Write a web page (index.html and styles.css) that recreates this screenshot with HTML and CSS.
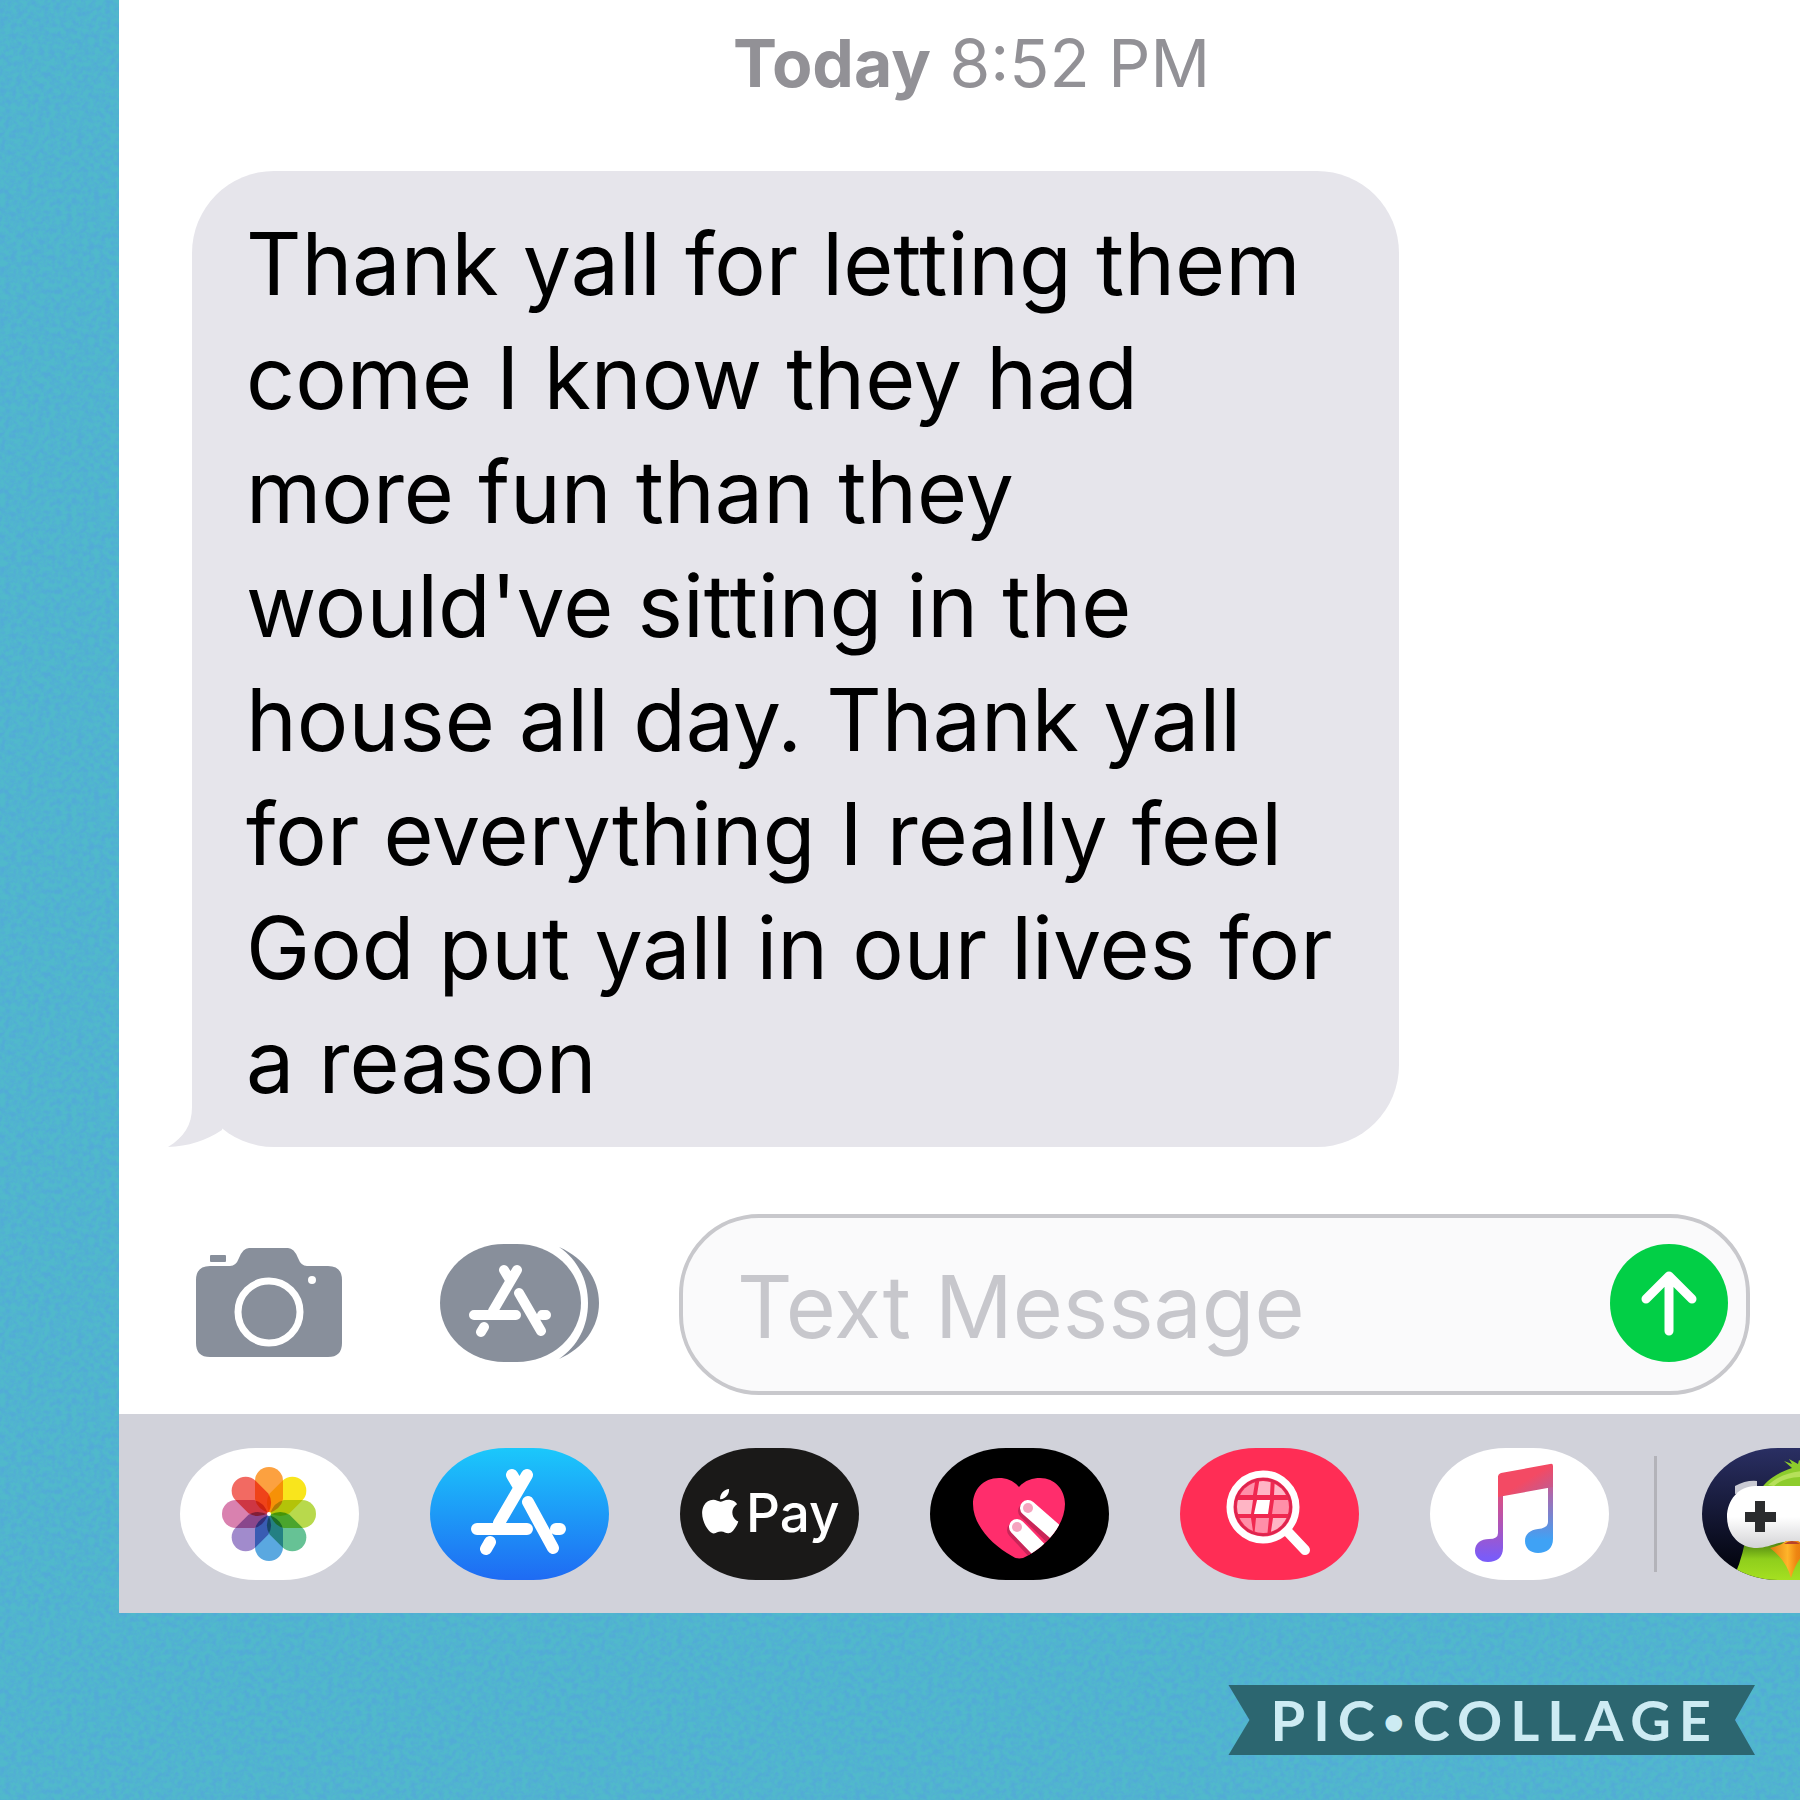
FILE: index.html
```html
<!DOCTYPE html>
<html lang="en">
<head>
<meta charset="utf-8">
<meta name="viewport" content="width=device-width, initial-scale=1">
<title>Messages</title>
<link rel="stylesheet" href="styles.css">
</head>
<body>
<main class="phone">
  <section class="thread">
    <p class="stamp"><strong>Today</strong> 8:52 PM</p>
    <div class="bubble">
      <p class="bubble-text">Thank yall for letting them<br>come I know they had<br>more fun than they<br>would've sitting in the<br>house all day. Thank yall<br>for everything I really feel<br>God put yall in our lives for<br>a reason</p>
      <svg class="tail" viewBox="0 0 60 90" aria-hidden="true"><path d="M24 0V50C24 68 16 80 0 90Q30 89 54 73L60 40V0z"/></svg>
    </div>
  </section>

  <form class="composer">
    <button class="tool camera" type="button" aria-label="Camera">
      <svg viewBox="0 0 146 110" width="146" height="110"><g fill="#888f9b"><rect x="14" y="7" width="16" height="7" rx="1"/><path d="M14 18H34Q40 18 43 10Q47 0 53 0H92Q98 0 102 10Q105 18 111 18H132Q146 18 146 32V95Q146 109 132 109H14Q0 109 0 95V32Q0 18 14 18z"/></g><circle cx="73" cy="64" r="31" fill="none" stroke="#fff" stroke-width="7"/><circle cx="116" cy="32" r="4" fill="#fff"/></svg>
    </button>
    <button class="tool apps" type="button" aria-label="Apps">
      <svg viewBox="0 0 160 118" width="160" height="118"><path fill="#888f9b" d="M119 3C144 14 159 35 159 59S144 104 119 115C138 102 148 82 148 59S138 16 119 3z"/><rect width="141" height="118" rx="64" ry="59" fill="#888f9b"/><g fill="none" stroke="#fff" stroke-width="10" stroke-linecap="round"><path d="M77 26L53 67M64 26L70 36M34 71H76M102 71H106M79 49L101 87M41 88L44 83"/></g></svg>
    </button>
    <div class="field">
      <input class="entry" type="text" placeholder="Text Message" aria-label="Text Message">
      <button class="send" type="submit" aria-label="Send">
        <svg viewBox="0 0 118 118" width="118" height="118"><path fill="none" stroke="#fff" stroke-width="9" stroke-linecap="round" stroke-linejoin="round" d="M59 87V33M36 55L59 32L82 55"/></svg>
      </button>
    </div>
  </form>

  <nav class="tray" aria-label="iMessage apps">
    <button class="app photos" type="button" aria-label="Photos">
      <svg viewBox="0 0 179 132" width="179" height="132">
        <defs><path id="petal" d="M-14 -33A14 14 0 0 1 14 -33V-15Q12 -5 0 -1Q-12 -5 -14 -15z"/></defs>
        <g class="petals" transform="translate(89 66)">
          <use href="#petal" fill="#fca140"/>
          <use href="#petal" fill="#f9e51c" transform="rotate(45)"/>
          <use href="#petal" fill="#b8d94c" transform="rotate(90)"/>
          <use href="#petal" fill="#66c295" transform="rotate(135)"/>
          <use href="#petal" fill="#5aa8e0" transform="rotate(180)"/>
          <use href="#petal" fill="#a18bcc" transform="rotate(225)"/>
          <use href="#petal" fill="#d981af" transform="rotate(270)"/>
          <use href="#petal" fill="#f26a62" transform="rotate(315)"/>
        </g>
        <circle cx="89" cy="66" r="2" fill="#fff"/>
      </svg>
    </button>
    <button class="app store" type="button" aria-label="App Store">
      <svg viewBox="0 0 179 132" width="179" height="132"><path fill="none" stroke="#fff" stroke-width="12" stroke-linecap="round" d="M97 27L69 75M82 27L89 39M47 81H97M126 81H130M98 54L123 100M56 101L60 94"/></svg>
    </button>
    <button class="app pay" type="button" aria-label="Apple Pay">
      <svg viewBox="0 0 179 132" width="179" height="132"><g fill="#fff"><path transform="translate(18 41) scale(1.85)" d="M12.152 6.896c-.948 0-2.415-1.078-3.96-1.04-2.04.027-3.91 1.183-4.961 3.014-2.117 3.675-.546 9.103 1.519 12.09 1.013 1.454 2.208 3.09 3.792 3.039 1.52-.065 2.09-.987 3.935-.987 1.831 0 2.35.987 3.96.948 1.637-.026 2.676-1.48 3.676-2.948 1.156-1.688 1.636-3.325 1.662-3.415-.039-.013-3.182-1.221-3.22-4.857-.026-3.04 2.48-4.494 2.597-4.559-1.429-2.09-3.623-2.324-4.39-2.376-2-.156-3.675 1.09-4.61 1.09zM15.53 3.83c.843-1.012 1.4-2.427 1.245-3.83-1.207.052-2.662.805-3.532 1.818-.78.896-1.454 2.338-1.273 3.714 1.338.104 2.715-.688 3.559-1.701"/><text class="pay-text" x="66" y="84">Pay</text></g></svg>
    </button>
    <button class="app touch" type="button" aria-label="Digital Touch">
      <svg viewBox="0 0 179 132" width="179" height="132">
        <defs><clipPath id="heart"><path d="M89 39C95 32 103 30 110 30C125 30 135 42 135 56C135 77 116 98 97 108Q89 113 82 108C62 97 43 77 43 56C43 42 53 30 69 30C77 30 84 33 89 39z"/></clipPath></defs>
        <g clip-path="url(#heart)"><rect width="179" height="132" fill="#ff2d6c"/>
          <g stroke-linecap="round" fill="none"><path stroke="#c92558" stroke-width="16" d="M85 82L110 109M96 63L132 98"/><path stroke="#fff" stroke-width="16" d="M98 60L138 95M87 79L117 110"/></g>
          <g fill="#f6a3bf"><circle cx="98" cy="60" r="5"/><circle cx="87" cy="79" r="5"/></g>
        </g>
      </svg>
    </button>
    <button class="app images" type="button" aria-label="#images">
      <svg viewBox="0 0 179 132" width="179" height="132">
        <defs><clipPath id="lens"><circle cx="83" cy="59" r="26"/></clipPath></defs>
        <circle cx="83" cy="59" r="29" fill="#d92650"/><circle cx="83" cy="59" r="27" fill="#f02850"/>
        <g clip-path="url(#lens)">
          <path fill="#ff8fa8" d="M50 28H76L73 47H50zM94 52H112V66H92zM50 70H71L74 90H50zM76 70H89L87 90H74z"/>
          <path fill="#ffb5c5" d="M80 28H91L90 47H77zM95 28H112V47H94zM50 52H73L71 66H50zM93 70H112V90H90z"/>
          <path fill="#fff" d="M77 52H90L88 66H74z"/>
        </g>
        <circle cx="83" cy="59" r="33" fill="none" stroke="#fff" stroke-width="7"/>
        <path stroke="#fff" stroke-width="10" stroke-linecap="round" d="M108 84L125 102"/>
      </svg>
    </button>
    <button class="app music" type="button" aria-label="Music">
      <svg viewBox="0 0 179 132" width="179" height="132">
        <defs>
          <linearGradient id="noteL" gradientUnits="userSpaceOnUse" x1="0" y1="28" x2="0" y2="110"><stop offset="0" stop-color="#f8465f"/><stop offset=".3" stop-color="#d4508b"/><stop offset="1" stop-color="#7a5cf8"/></linearGradient>
          <linearGradient id="noteR" gradientUnits="userSpaceOnUse" x1="0" y1="18" x2="0" y2="92"><stop offset="0" stop-color="#f8465f"/><stop offset=".4" stop-color="#a86bb0"/><stop offset="1" stop-color="#3fa2f5"/></linearGradient>
          <linearGradient id="beam" x1="0" y1="0" x2="1" y2="1"><stop offset=".5" stop-color="#f34a64"/><stop offset="1" stop-color="#b3609f"/></linearGradient>
        </defs>
        <path fill="url(#noteL)" d="M68 28H73V100C73 109 67 114 58 114C50 114 45 109 45 103C45 95 51 91 59 91Q68 91 68 85z"/>
        <path fill="url(#noteR)" d="M118 18H123V91C123 100 117 105 108 105C100 105 95 100 95 93C95 86 100 82 108 81Q118 80 118 74z"/>
        <path fill="url(#beam)" d="M68 29Q68 26 71 25L120 16Q123 15 123 18V39L68 49z"/>
      </svg>
    </button>
    <span class="divider"></span>
    <button class="app game" type="button" aria-label="GamePigeon">
      <svg viewBox="0 0 179 132" width="179" height="132">
        <defs>
          <linearGradient id="night" x1="0" y1="0" x2="0" y2="1"><stop offset="0" stop-color="#2a2f63"/><stop offset=".9" stop-color="#03050f"/></linearGradient>
          <linearGradient id="pad" x1="0" y1="0" x2="0" y2="1"><stop offset=".5" stop-color="#fff"/><stop offset="1" stop-color="#d3d3d6"/></linearGradient>
          <linearGradient id="beak" x1="0" y1="0" x2="1" y2="0"><stop offset="0" stop-color="#e07a10"/><stop offset=".4" stop-color="#ffb52a"/><stop offset=".6" stop-color="#ee8612"/><stop offset="1" stop-color="#d96c08"/></linearGradient>
          <linearGradient id="belly" x1="0" y1="0" x2="0" y2="1"><stop offset="0" stop-color="#4c8210"/><stop offset=".45" stop-color="#8fce1c"/><stop offset="1" stop-color="#a5e021"/></linearGradient>
        </defs>
        <rect width="179" height="132" fill="url(#night)"/>
        <path fill="#8dcc2c" d="M58 42C66 30 78 24 90 20L82 13L90 16L87 11L96 16L97 12L104 18C124 20 134 30 138 42z"/>
        <path fill="#b6e05a" d="M66 37C76 28 86 25 100 23V29C88 29 78 32 72 38z"/>
        <path fill="#c9cad3" d="M33 46V38Q44 32 55 33V42z"/>
        <path fill="url(#belly)" d="M43 94H136L146 132H30Q38 118 43 94z"/>
        <path fill="url(#pad)" d="M53 38H126C144 38 155 51 155 68S144 100 126 100C116 100 108 95 90 93C74 94 66 100 55 100C37 100 25 86 25 69S37 38 53 38z"/>
        <path fill="url(#beak)" d="M68 100Q78 98 84 93H96Q104 98 112 100Q96 106 89 130Q84 112 68 100z"/>
        <path fill="#b8432a" d="M82 96Q90 90 98 96z"/>
        <path fill="#2b2c2e" d="M53 53H63V64H74V74H63V84H53V74H43V64H53z"/>
      </svg>
    </button>
  </nav>
</main>
<footer class="credit"><span class="ribbon">PIC<span class="dot">•</span>COLLAGE</span></footer>
</body>
</html>
```
FILE: styles.css
```css
* { box-sizing: border-box; }

body {
  margin: 0;
  background: #50b9cb url("data:image/svg+xml,%3Csvg xmlns='http://www.w3.org/2000/svg' width='300' height='300'%3E%3Cfilter id='n' x='0' y='0' width='1' height='1' color-interpolation-filters='sRGB'%3E%3CfeTurbulence type='fractalNoise' baseFrequency='.18' numOctaves='3' stitchTiles='stitch'/%3E%3CfeColorMatrix values='0 0 0 0 .32 0 0 0 0 .67 0 0 0 0 .84 2.4 0 0 0 -.8'/%3E%3C/filter%3E%3Crect width='300' height='300' filter='url(%23n)'/%3E%3C/svg%3E");
  font-family: Inter, "Liberation Sans", sans-serif;
  overflow-x: hidden;
}

p { margin: 0; }
button { border: 0; padding: 0; background: none; }
svg { display: block; }

.phone { margin-left: 119px; background: #fff; overflow: hidden; }

.thread { padding: 23px 0 0 24px; }
.stamp {
  margin-bottom: 68px;
  font-size: 66px;
  line-height: 80px;
  color: #929196;
  text-align: center;
}

.bubble {
  position: relative;
  width: fit-content;
  margin-left: 49px;
  padding: 36px 66px 28px 54px;
  border-radius: 82px;
  background: #e6e5eb;
}
.bubble-text { font-size: 86px; line-height: 114px; color: #000; }
.tail { position: absolute; left: -24px; bottom: 0; width: 60px; height: 90px; fill: #e6e5eb; }

.composer { display: flex; align-items: center; padding: 67px 50px 19px 77px; }
.tool { flex: none; margin-bottom: 4px; }
.camera { margin-right: 98px; }
.apps { margin-right: 79px; }
.field {
  display: flex;
  flex: 1;
  align-items: center;
  min-width: 0;
  height: 181px;
  padding: 0 18px 4px 54px;
  border: 4px solid #c8c8cc;
  border-radius: 80px;
  background: #fafafb;
}
.entry {
  flex: 1;
  min-width: 0;
  padding: 8px 0 0;
  border: 0;
  outline: 0;
  background: none;
  font-family: inherit;
  font-size: 86px;
  line-height: 114px;
  color: #000;
}
.entry::placeholder { color: #c7c7cc; opacity: 1; }
.send { flex: none; border-radius: 50%; background: #02cf46; }

.tray { display: flex; align-items: center; gap: 71px; padding: 34px 0 33px 61px; background: #d1d2da; }
.app { flex: none; overflow: hidden; border-radius: 76px / 66px; }
.photos, .music { background: #fff; }
.petals { isolation: isolate; }
.petals use { mix-blend-mode: multiply; }
.store { background: linear-gradient(#1bc8fb, #1f6bf3); }
.pay { background: #1a1918; }
.pay-text { font-family: Inter, "Liberation Sans", sans-serif; font-size: 53px; font-weight: 500; }
.touch { background: #000; }
.images { background: #ff2d55; }
.divider { flex: none; width: 3px; height: 116px; margin: 0 -26px; background: #b3b3b9; }

.credit { display: flex; justify-content: flex-end; padding: 72px 45px 45px; }
.ribbon {
  display: flex;
  align-items: center;
  padding: 0 36px 0 42px;
  background: #2c6670;
  clip-path: polygon(0 0, 100% 0, calc(100% - 20px) 50%, 100% 100%, 0 100%, 21px 50%);
  font-family: Lato, sans-serif;
  font-size: 56px;
  font-weight: 700;
  line-height: 70px;
  letter-spacing: 8px;
  color: #cdebf3;
}
.dot { font-size: 38px; }
```
